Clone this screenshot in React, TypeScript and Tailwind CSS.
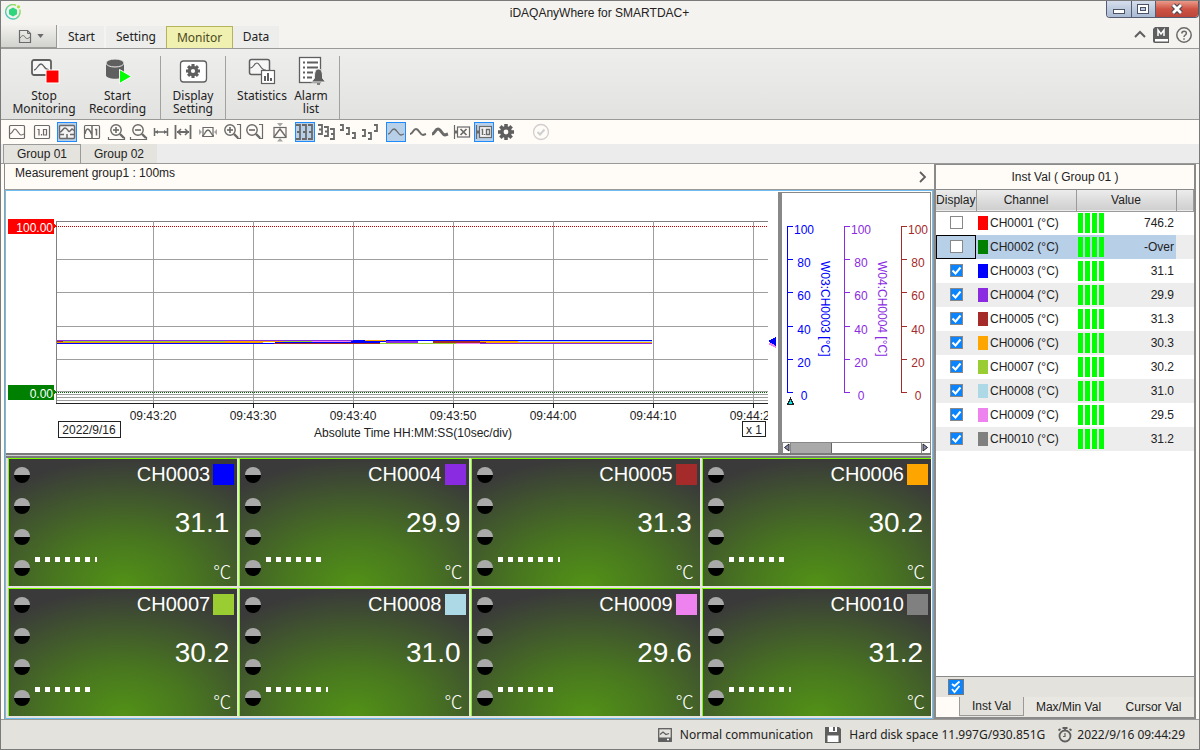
import { useState, type ReactNode } from 'react';
import clsx from 'clsx';

const channels = [
  { id: 'CH0001', color: '#ff0000', value: '746.2' },
  { id: 'CH0002', color: '#008000', value: '-Over' },
  { id: 'CH0003', color: '#0000ff', value: '31.1' },
  { id: 'CH0004', color: '#8a2be2', value: '29.9' },
  { id: 'CH0005', color: '#a52a2a', value: '31.3' },
  { id: 'CH0006', color: '#ffa500', value: '30.3' },
  { id: 'CH0007', color: '#9acd32', value: '30.2' },
  { id: 'CH0008', color: '#add8e6', value: '31.0' },
  { id: 'CH0009', color: '#ee82ee', value: '29.5' },
  { id: 'CH0010', color: '#808080', value: '31.2' },
];

const tiles = [
  { id: 'CH0003', color: '#0000ff', value: '31.1', bar: 62 },
  { id: 'CH0004', color: '#8a2be2', value: '29.9', bar: 56 },
  { id: 'CH0005', color: '#a52a2a', value: '31.3', bar: 62 },
  { id: 'CH0006', color: '#ffa500', value: '30.2', bar: 56 },
  { id: 'CH0007', color: '#9acd32', value: '30.2', bar: 56 },
  { id: 'CH0008', color: '#add8e6', value: '31.0', bar: 62 },
  { id: 'CH0009', color: '#ee82ee', value: '29.6', bar: 56 },
  { id: 'CH0010', color: '#808080', value: '31.2', bar: 62 },
];

// [y, x1, x2, color]
const traces: [number, number, number, string][] = [
  [149, 51, 347, '#8a2be2'],
  [149, 347, 359, '#0000ff'],
  [149, 359, 380, '#ffa500'],
  [149, 380, 646, '#0000ff'],
  [150, 51, 57, '#a52a2a'],
  [150, 57, 219, '#9acd32'],
  [150, 219, 277, '#ffa500'],
  [150, 277, 306, '#9acd32'],
  [150, 306, 345, '#ee82ee'],
  [150, 345, 380, '#0000ff'],
  [150, 380, 412, '#8a2be2'],
  [150, 427, 474, '#a52a2a'],
  [150, 474, 512, '#ffa500'],
  [150, 512, 646, '#add8e6'],
  [151, 51, 257, '#ee9a00'],
  [151, 269, 374, '#0000ff'],
  [151, 380, 412, '#8a2be2'],
  [151, 427, 480, '#a52a2a'],
  [151, 480, 646, '#ffa500'],
  [152, 51, 268, '#0000ff'],
  [152, 268, 374, '#a52a2a'],
  [152, 374, 450, '#9acd32'],
  [152, 450, 474, '#ee82ee'],
  [152, 474, 646, '#8a2be2'],
];

const times = ['09:43:20', '09:43:30', '09:43:40', '09:43:50', '09:44:00', '09:44:10', '09:44:20'];

const scaleTicks = [100, 80, 60, 40, 20, 0];
const scaleY = [35, 68, 101, 135, 168, 201];

const GEAR_TEETH = [0, 45, 90, 135, 180, 225, 270, 315];

function Gear({ cx, cy, r, hole }: { cx: number; cy: number; r: number; hole: string }) {
  return (
    <g fill="#5f5f5f" stroke="none">
      {GEAR_TEETH.map((a) => (
        <rect
          key={a}
          x={cx - r * 0.22}
          y={cy - r}
          width={r * 0.44}
          height={r}
          transform={`rotate(${a} ${cx} ${cy})`}
        />
      ))}
      <circle cx={cx} cy={cy} r={r * 0.74} />
      <circle cx={cx} cy={cy} r={r * 0.3} fill={hole} />
    </g>
  );
}

function ToolButton({ label, active, children }: { label: string; active?: boolean; children: ReactNode }) {
  return (
    <button
      type="button"
      aria-label={label}
      className={clsx(
        'h-5 w-5 shrink-0 text-[#6a6a6a]',
        active && 'bg-[#b8cfe8] outline -outline-offset-1 outline-[#1e8cff]'
      )}
    >
      <svg viewBox="0 0 20 20" className="h-5 w-5" fill="none" stroke="currentColor" strokeWidth="1.2">
        {children}
      </svg>
    </button>
  );
}

function Frame() {
  return <rect x="2.5" y="3.5" width="15" height="13" rx="1" />;
}

function Magnifier({ plus, bracket }: { plus?: boolean; bracket?: boolean }) {
  const cx = bracket ? 7 : 9;
  return (
    <>
      <circle cx={cx} cy="8" r="5.2" strokeWidth="1.4" />
      <path d={`M${cx + 4} 12l4 4`} strokeWidth="2.4" />
      <path d={`M${cx - 3} 8h6`} strokeWidth="1.6" />
      {plus && <path d={`M${cx} 5v6`} strokeWidth="1.6" />}
      {bracket ? <path d="M14 2.500h3.500v14H14" strokeWidth="1.200" /> : <path d="M1.500 15v2.500h16V15" />}
    </>
  );
}

// "]" shaped axis mark with a centre tick, used by the scale layout buttons
function AxisMark({ x, y, h }: { x: number; y: number; h: number }) {
  return <path d={`M${x} ${y}h4v${h}h-4M${x + 1} ${y + h / 2}h3`} strokeWidth="1.8" />;
}

function ToolBar() {
  return (
    <div className="flex h-6 items-center gap-[5px] bg-[#fffbf6] pl-[6px]">
      <ToolButton label="Trend">
        <Frame />
        <path d="M3 12c3-1 3-5 5-5s4 6 6 6 2-1 3-1" />
      </ToolButton>
      <ToolButton label="Digital">
        <Frame />
        <path d="M5.500 7.500h1.500v6M9.500 12v1.500M11.500 7.500h3v5.500h-3z" />
      </ToolButton>
      <ToolButton label="Trend and digital" active>
        <rect x="2.5" y="3.500" width="15" height="13" rx="1" fill="#f4f4f4" strokeWidth="1.400" />
        <path d="M3 10c2 0 3-4 5-4 3 0 3 5 5 3l2-2 2 1.500M3 12.500h4M13 12.500h4M10 12v5" strokeWidth="1.500" />
      </ToolButton>
      <ToolButton label="Trend with values">
        <Frame />
        <path d="M3 12c1-6 3-6 5-3l2 4M10 4v12M13 7.500h1.500v6" strokeWidth="1.500" />
      </ToolButton>
      <div className="flex gap-[2px]">
        <ToolButton label="Zoom in time">
          <Magnifier plus />
        </ToolButton>
        <ToolButton label="Zoom out time">
          <Magnifier />
        </ToolButton>
        <ToolButton label="Fit width">
          <path d="M3.500 6v8M16.500 6v8M4 10h12" strokeWidth="1.500" />
          <path d="M4 10l3-2v4zM16 10l-3-2v4z" fill="currentColor" stroke="none" />
        </ToolButton>
        <ToolButton label="Full width">
          <path d="M2.500 3v14M17.500 3v14M4 10h12" strokeWidth="1.800" />
          <path d="M8 7l-3 3 3 3M12 7l3 3-3 3" strokeWidth="1.500" />
        </ToolButton>
      </div>
      <ToolButton label="Auto range">
        <path d="M5 5.500h10v9H5z" />
        <path d="M4 14c3 0 3-6 6-6s3 6 6 6" strokeWidth="1.300" />
        <path d="M1 7l3 3-3 3zM19 7l-3 3 3 3z" fill="#a5a5a5" stroke="none" />
      </ToolButton>
      <div className="flex gap-[2px]">
        <ToolButton label="Zoom in scale">
          <Magnifier plus bracket />
        </ToolButton>
        <ToolButton label="Zoom out scale">
          <Magnifier bracket />
        </ToolButton>
      </div>
      <ToolButton label="Fit scale">
        <rect x="4" y="5.500" width="12" height="10" />
        <path d="M4 15l6-8 6 8" strokeWidth="1.400" />
        <path d="M7 1h6l-3 3.500zM7 19.500h6l-3-3.500z" fill="#a5a5a5" stroke="none" />
      </ToolButton>
      <div className="flex gap-[2px]">
        <ToolButton label="Scales aligned" active>
          <AxisMark x={1} y={3} h={14} />
          <AxisMark x={7} y={3} h={14} />
          <AxisMark x={13} y={3} h={14} />
        </ToolButton>
        <ToolButton label="Scales cascade">
          <AxisMark x={1} y={3} h={9} />
          <AxisMark x={7} y={5} h={9} />
          <AxisMark x={13} y={7} h={10} />
        </ToolButton>
        <ToolButton label="Scales stepped">
          <path d="M1 3h3v5H1M7 6h3v6H7M13 11h3v5h-3" strokeWidth="1.800" />
        </ToolButton>
        <ToolButton label="Scales stepped up">
          <path d="M1 8h3v6H1M7 11h3v6H7M13 3h3v6h-3" strokeWidth="1.800" />
        </ToolButton>
      </div>
      <div className="flex gap-[2px]">
        <ToolButton label="Thin line" active>
          <path d="M2 12c3 0 3-5 6-5s4 6 7 6l3-1" strokeWidth="1.300" />
        </ToolButton>
        <ToolButton label="Medium line">
          <path d="M2 12c3 0 3-5 6-5s4 6 7 6l3-1" strokeWidth="2" />
        </ToolButton>
        <ToolButton label="Thick line">
          <path d="M2 12c3 0 3-5 6-5s4 6 7 6l3-1" strokeWidth="3" />
        </ToolButton>
        <ToolButton label="Hide alarm">
          <path d="M2.500 3v14" />
          <rect x="5.500" y="5" width="12" height="10" />
          <path d="M2 10h3" strokeWidth="3" />
          <path d="M8.500 7l6 6M14.500 7l-6 6" strokeWidth="1.700" />
        </ToolButton>
        <ToolButton label="Show current value" active>
          <path d="M2.500 3v14" />
          <rect x="5.500" y="4.500" width="12" height="11" fill="#f4f4f4" />
          <path d="M2 10h3" strokeWidth="3" />
          <path d="M7.500 7.500h1v5.500M10.500 12v1M12.500 7.500h3v5h-3z" strokeWidth="1.400" />
        </ToolButton>
        <ToolButton label="Display options">
          <Gear cx={10} cy={10} r={8} hole="#fffbf6" />
        </ToolButton>
      </div>
      <div className="flex pl-[10px]">
        <ToolButton label="Acknowledge">
          <circle cx="10" cy="10" r="7.500" stroke="#cfcfcf" strokeWidth="1.300" />
          <path d="M6.500 10l2.500 2.500 4.500-5" stroke="#cfcfcf" strokeWidth="2" />
        </ToolButton>
      </div>
    </div>
  );
}

function AppLogo() {
  return (
    <svg width="16" height="16" viewBox="0 0 16 16" fill="none" className="shrink-0">
      <defs>
        <linearGradient id="ring" x1="0" y1="1" x2="1" y2="0">
          <stop offset="0" stopColor="#3dc2d8" />
          <stop offset="1" stopColor="#a6e244" />
        </linearGradient>
      </defs>
      <path d="M11 1.300A7.200 7.200 0 1 0 14.700 5.500" stroke="url(#ring)" strokeWidth="1.400" />
      <path d="M8 3.500l4 2.200v4.600l-4 2.200-4-2.200V5.700z" fill="#2fd67d" />
      <circle cx="13.500" cy="2.800" r="1.600" fill="#a6e244" />
    </svg>
  );
}

function TitleBar() {
  return (
    <header className="flex h-6 items-start justify-between pl-1">
      <div className="flex w-[88px] pt-[3px]">
        <AppLogo />
      </div>
      <h1 className="pt-[2px] text-[12px] leading-[20px]">iDAQAnyWhere for SMARTDAC+</h1>
      <div className="flex h-[17px] w-[93px] overflow-hidden rounded-b border border-t-0 border-[#555b70]">
        <button
          type="button"
          aria-label="Minimize"
          className="flex flex-1 items-end justify-center border-r border-[#555b70] bg-linear-to-b from-[#d5deec] to-[#a9bad2] pb-[3px]"
        >
          <span className="h-[5px] w-3 border border-[#4b5265] bg-white" />
        </button>
        <button
          type="button"
          aria-label="Maximize"
          className="flex flex-1 items-center justify-center border-r border-[#555b70] bg-linear-to-b from-[#d5deec] to-[#a9bad2]"
        >
          <span className="flex h-[10px] w-3 items-center justify-center border border-[#4b5265] bg-white">
            <span className="h-1 w-[6px] border border-[#4b5265] bg-[#b9c8dd]" />
          </span>
        </button>
        <button
          type="button"
          aria-label="Close"
          className="flex w-[42px] items-center justify-center bg-linear-to-b from-[#e99a8b] via-[#cf5344] to-[#b9473b]"
        >
          <svg width="14" height="12" viewBox="0 0 14 12">
            <path d="M3 2l8 8M11 2l-8 8" stroke="#4b4450" strokeWidth="5" />
            <path d="M3 2l8 8M11 2l-8 8" stroke="#fff" strokeWidth="2.800" />
          </svg>
        </button>
      </div>
    </header>
  );
}

function RibbonTabs() {
  const [tab, setTab] = useState('Monitor');
  return (
    <nav className="flex h-6 items-end border-b border-[#9a9a98] font-['Noto_Sans',sans-serif] text-[12px]">
      <button
        type="button"
        aria-label="File menu"
        className="mr-[2px] flex h-[23px] w-14 items-center justify-center gap-[5px] self-start border-r border-b border-[#9a9a98] bg-linear-to-b from-[#f3f2ef] to-[#d2d2cf] pl-1"
      >
        <svg width="14" height="15" viewBox="0 0 14 15" fill="none" stroke="#6a6a6a">
          <path d="M1.500 1.500h8l3 3v9h-11z" strokeWidth="1.200" />
          <path d="M9.500 1.500v3h3M2 9c2-3 4-3 5-1s3 2 5 0" />
        </svg>
        <svg width="7" height="4" viewBox="0 0 8 5">
          <path d="M0 0h8l-4 5z" fill="#6a6a6a" />
        </svg>
      </button>
      {['Start', 'Setting', 'Monitor', 'Data'].map((name) => (
        <button
          key={name}
          type="button"
          onClick={() => setTab(name)}
          className={clsx(
            'h-[22px] leading-[22px]',
            name === 'Start' && 'mr-[2px] w-[45px]',
            name === 'Setting' && 'w-[60px]',
            name === 'Monitor' && 'w-[67px]',
            name === 'Data' && 'w-[46px]',
            tab === name ? 'border border-b-0 border-[#b5b45a] bg-[#f0f0b0] text-[#4a4a20]' : 'bg-[#ededeb]'
          )}
        >
          {name}
        </button>
      ))}
      <div className="ml-auto flex items-center gap-[7px] self-start pt-[2px] pr-[7px]">
        <button type="button" aria-label="Collapse ribbon">
          <svg width="12" height="16" viewBox="0 0 12 16" fill="none" stroke="#5f5f5f" strokeWidth="2">
            <path d="M1 10l5-5 5 5" />
          </svg>
        </button>
        <button type="button" aria-label="Manual">
          <svg width="16" height="16" viewBox="0 0 16 16">
            <path d="M2 0h14v16H2a2 2 0 0 1-2-2V2z" fill="#5f5f5f" />
            <path d="M2 12h13v2.500H2z" fill="#fff" />
            <path d="M5 9V3l3 4 3-4v6" fill="none" stroke="#fff" strokeWidth="1.500" />
          </svg>
        </button>
        <button type="button" aria-label="Help">
          <svg width="16" height="16" viewBox="0 0 16 16" fill="none" stroke="#6a6a6a" strokeWidth="1.500">
            <circle cx="8" cy="8" r="7.200" />
            <path d="M5.800 6.500c0-3 4.600-3 4.600-.3C10.400 8 8 8 8 10M8 11.200v1.600" />
          </svg>
        </button>
      </div>
    </nav>
  );
}

function RibbonButton({ lines, width, children }: { lines: string[]; width: string; children: ReactNode }) {
  return (
    <button type="button" className={clsx('flex flex-col items-center', width)}>
      <svg width="32" height="32" viewBox="0 0 32 32" fill="none" stroke="#5f5f5f" className="shrink-0">
        {children}
      </svg>
      <span className="pt-px text-[12px] leading-[13px]">
        {lines.map((line) => (
          <span key={line} className="block">
            {line}
          </span>
        ))}
      </span>
    </button>
  );
}

function Ribbon() {
  return (
    <section className="flex h-[71px] items-stretch border-b border-[#9a9a98] bg-linear-to-b from-[#eeeeec] to-[#e2e2e0] pt-[7px] font-['Noto_Sans',sans-serif]">
      <div className="flex gap-2 border-r border-[#a2a2a2] pr-3 pl-2">
        <RibbonButton lines={['Stop', 'Monitoring']} width="w-[70px]">
          <rect x="4" y="4" width="19" height="15" rx="2" fill="#f6f6f6" strokeWidth="1.800" />
          <path d="M6 14c3 0 4-6 7-6s3 6 8 6" strokeWidth="1.300" />
          <rect x="18" y="14" width="13" height="13" fill="#ff0000" stroke="#fff" />
        </RibbonButton>
        <RibbonButton lines={['Start', 'Recording']} width="w-[61px]">
          <path d="M4 7v12c0 5 18 5 18 0V7z" fill="#5f5f5f" stroke="none" />
          <ellipse cx="13" cy="7" rx="9" ry="4" fill="#5f5f5f" stroke="#ececea" />
          <path d="M17.500 13.500v14l12-7z" fill="#00ff00" stroke="#fff" />
        </RibbonButton>
      </div>
      <div className="flex w-[65px] justify-center border-r border-[#a2a2a2]">
        <RibbonButton lines={['Display', 'Setting']} width="w-14">
          <rect x="3.500" y="5" width="26" height="21" rx="3" fill="#fff" strokeWidth="1.300" />
          <Gear cx={16} cy={15} r={7} hole="#fff" />
        </RibbonButton>
      </div>
      <div className="flex gap-px border-r border-[#a2a2a2] pr-2 pl-2">
        <RibbonButton lines={['Statistics']} width="w-14">
          <rect x="3.500" y="3.500" width="20" height="15" rx="2" fill="#f6f6f6" strokeWidth="1.500" />
          <path d="M4 12c4 0 4-5 7-5s4 8 9 7" strokeWidth="1.200" />
          <rect x="15.500" y="14.500" width="13" height="13" fill="#fff" strokeWidth="1.200" />
          <path d="M19 25v-5M22 25v-8M25 25v-3" strokeWidth="2" />
        </RibbonButton>
        <RibbonButton lines={['Alarm', 'list']} width="w-10">
          <rect x="4.500" y="1.500" width="21" height="25" fill="#fff" strokeWidth="1.300" />
          <path d="M8 6.500h2M8 11.500h2M8 16.500h2M8 21.500h2M12 6.500h11M12 11.500h11M12 16.500h6M12 21.500h5" strokeWidth="2" />
          <path d="M23.500 13c4 0 4 5 4 9l3 4h-14l3-4c0-4 0-9 4-9z" fill="#5f5f5f" stroke="#f2f2f0" />
          <path d="M22 28h3" strokeWidth="1.500" />
        </RibbonButton>
      </div>
    </section>
  );
}

function TrendPlot() {
  return (
    <div className="flex min-w-0 flex-1">
      <svg className="h-full min-w-0 flex-1" fontSize="12" fill="#222" shapeRendering="crispEdges">
        {[68, 101, 135, 168, 200, 203, 206, 209].map((y) => (
          <path key={y} d={`M50 ${y}.5h2000`} stroke="#9e9e9e" />
        ))}
        <path d="M50 30.5h2000M50.500 30v182" stroke="#808080" fill="none" />
        {times.map((t, i) => (
          <g key={t}>
            <path d={`M${147 + i * 100}.5 30v182`} stroke="#9e9e9e" />
            <path d={`M${147 + i * 100}.5 212v5`} stroke="#222" />
            <text x={147 + i * 100} y="229" textAnchor="middle">
              {t}
            </text>
          </g>
        ))}
        <path d="M50 212.500h2000" stroke="#222" />
        <path d="M50 35.500h2000" stroke="#c00000" strokeDasharray="1 1" />
        <path d="M50 201.500h2000" stroke="#006000" strokeDasharray="1 1" />
        {traces.map(([y, x1, x2, color]) => (
          <rect key={`${y}-${x1}`} x={x1} y={y} width={x2 - x1} height="1" fill={color} />
        ))}
        <path d="M2 28h46v5l2 2-2 2v6H2z" fill="#ff0000" />
        <path d="M2 194h46v5l2 2-2 2v6H2z" fill="#008000" />
        <text x="47" y="41" fill="#fff" textAnchor="end">
          100.00
        </text>
        <text x="47" y="207" fill="#fff" textAnchor="end">
          0.00
        </text>
        <rect x="52.500" y="230.500" width="62" height="16" fill="#fff" stroke="#222" />
        <text x="83" y="243" textAnchor="middle">
          2022/9/16
        </text>
        <text x="407" y="246" textAnchor="middle">
          Absolute Time HH:MM:SS(10sec/div)
        </text>
        <rect x="736.500" y="230.500" width="23" height="15" fill="#fff" stroke="#222" />
        <text x="748" y="243" textAnchor="middle">
          x 1
        </text>
      </svg>
      <svg className="h-full w-[10px] shrink-0" shapeRendering="crispEdges">
        <path d="M0 152l8-4v8z" fill="#ee82ee" transform="translate(0 1)" />
        <path d="M0 150l8-4v9z" fill="#0000ff" />
      </svg>
    </div>
  );
}

function ScalePane() {
  const scales = [
    { x: 5, color: '#0000ff', name: 'W03:CH0003 [°C]' },
    { x: 62, color: '#8a2be2', name: 'W04:CH0004 [°C]' },
    { x: 119, color: '#a52a2a', name: '' },
  ];
  return (
    <div className="mt-px flex w-[153px] shrink-0 flex-col border-t border-r border-l-4 border-[#888]">
      <svg className="min-h-0 w-full flex-1" fontSize="12" shapeRendering="crispEdges">
        {scales.map((s) => (
          <g key={s.x} fill={s.color}>
            <path d={`M${s.x}.5 33v167`} stroke={s.color} />
            {scaleTicks.map((v, i) => (
              <g key={v}>
                <path d={`M${s.x} ${scaleY[i] - 2}.5h6`} stroke={s.color} />
                <text x={s.x + 17} y={scaleY[i] + 6} textAnchor="middle">
                  {v}
                </text>
              </g>
            ))}
            {s.name && <text transform={`translate(${s.x + 34} 68) rotate(90)`}>{s.name}</text>}
          </g>
        ))}
        <path d="M5.500 211.500h6l-3-6z" fill="#00e5e5" stroke="#222" />
      </svg>
      <div className="flex h-[11px] border-t border-l border-[#888] bg-white">
        <button type="button" aria-label="Scroll left" className="w-2 border-r border-[#888]">
          <svg width="7" height="10" viewBox="0 0 7 10">
            <path d="M6 1v7L1.500 4.500z" fill="#8a8ab8" stroke="#222" />
          </svg>
        </button>
        <div className="h-full w-[41px] border-r border-[#666] bg-[#a9a9a9]" />
        <button type="button" aria-label="Scroll right" className="ml-auto w-[9px] border-l border-[#888]">
          <svg width="7" height="10" viewBox="0 0 7 10">
            <path d="M1 1v7l4.500-3.500z" fill="#8a8ab8" stroke="#222" />
          </svg>
        </button>
      </div>
    </div>
  );
}

function DigitalTile({ id, color, value, bar }: (typeof tiles)[number]) {
  return (
    <article className="flex h-32 border-t border-l border-[#7cfc00] bg-[radial-gradient(ellipse_80%_100%_at_50%_100%,#529216_0%,#487520_40%,#3a3a3a_100%)] pr-[3px] text-white">
      <ul className="flex w-[26px] flex-col gap-[15px] pt-2 pl-[5px]">
        {[1, 2, 3, 4].map((n) => (
          <li key={n} className="h-4 w-4 rounded-full bg-linear-to-b from-[#a9a9a9] from-50% to-black to-50%" />
        ))}
      </ul>
      <div className="flex flex-1 flex-col">
        <div className="flex items-center justify-end gap-[3px] pt-1">
          <span className="text-[20px] leading-[22px]">{id}</span>
          <span className="h-[21px] w-[21px]" style={{ backgroundColor: color }} />
        </div>
        <div className="pt-[22px] pr-[5px] text-right text-[28px] leading-[32px]">{value}</div>
        <div
          className="mt-[18px] h-[5px] bg-[repeating-linear-gradient(90deg,#fff_0_5px,transparent_5px_10px)]"
          style={{ width: bar }}
        />
        <div className="pr-[3px] text-right font-['Noto_Sans_CJK_JP',sans-serif] text-[18px] leading-[18px] font-light">
          ℃
        </div>
      </div>
    </article>
  );
}

function GroupTabs() {
  const [group, setGroup] = useState('Group 01');
  return (
    <div className="flex h-5 border-b border-[#9a9a98] bg-[#ececec] pl-[2px] text-[12px]">
      {['Group 01', 'Group 02'].map((g) => (
        <button
          key={g}
          type="button"
          onClick={() => setGroup(g)}
          className={clsx('bg-[#e5e3de]', group === g ? 'w-[78px] border border-b-0 border-[#9a9a98]' : 'w-[76px]')}
        >
          {g}
        </button>
      ))}
    </div>
  );
}

function InstValPanel() {
  const [shown, setShown] = useState<Record<string, boolean>>(
    Object.fromEntries(channels.map((c, i) => [c.id, i > 1]))
  );

  return (
    <aside className="flex w-[262px] shrink-0 flex-col border-2 border-t border-[#8a8a8a] bg-[#e4e2dc] text-[12px]">
      <h2 className="h-[25px] border-b border-[#8a8a8a] bg-[#fffbf6] text-center leading-[24px]">
        Inst Val ( Group 01 )
      </h2>
      <div className="flex-1 border-b border-[#8a8a8a] bg-white">
        <table className="w-full table-fixed border-collapse">
          <thead>
            <tr className="h-[21px] border-b border-[#9a9a98] bg-linear-to-b from-[#ececec] to-[#cfcfcf]">
              <th className="w-10 border-r border-[#9a9a98] font-normal">Display</th>
              <th className="w-[100px] border-r border-[#9a9a98] font-normal">Channel</th>
              <th className="w-[100px] border-r border-[#9a9a98] font-normal">Value</th>
              <th className="border-r border-[#9a9a98]" />
            </tr>
          </thead>
          <tbody>
            {channels.map((c, i) => (
              <tr key={c.id} className={clsx('h-6', i % 2 === 1 && 'bg-[#ededed]')}>
                <td
                  className={clsx(
                    'p-0 pb-px',
                    c.id === 'CH0002' && 'bg-[#b8cfe8] outline -outline-offset-1 outline-black'
                  )}
                >
                  <label className="relative mx-auto block h-[13px] w-[13px]">
                    <input
                      type="checkbox"
                      aria-label={`Display ${c.id}`}
                      checked={shown[c.id]}
                      onChange={(e) => setShown({ ...shown, [c.id]: e.target.checked })}
                      className="peer block h-[13px] w-[13px] appearance-none border border-[#888] bg-white checked:bg-[#0a84ff]"
                    />
                    <svg
                      viewBox="0 0 13 13"
                      className="pointer-events-none absolute inset-0 hidden peer-checked:block"
                      fill="none"
                      stroke="#fff"
                      strokeWidth="2"
                    >
                      <path d="M2.500 6.500l3 3 5-6" />
                    </svg>
                  </label>
                </td>
                <td className={clsx('p-0', c.id === 'CH0002' && 'bg-[#b8cfe8]')}>
                  <div className="flex items-center gap-[2px] pl-[2px]">
                    <span className="h-[14px] w-[10px]" style={{ backgroundColor: c.color }} />
                    {c.id} (°C)
                  </div>
                </td>
                <td className={clsx('p-0', c.id === 'CH0002' && 'bg-[#b8cfe8]')}>
                  <div className="flex items-center justify-between pr-[2px] pl-[2px]">
                    <span className="h-5 w-[26px] bg-[repeating-linear-gradient(90deg,#00ff00_0_5px,transparent_5px_7px)]" />
                    {c.value}
                  </div>
                </td>
                <td />
              </tr>
            ))}
          </tbody>
        </table>
      </div>
      <div className="flex h-5 items-center pl-3">
        <button type="button" aria-label="Toggle all channels" className="h-4 w-4 border border-[#777] bg-[#0a84ff]">
          <svg viewBox="0 0 14 14" className="h-[14px] w-[14px]" fill="none" stroke="#fff" strokeWidth="1.800">
            <path d="M3 4l2.500 2 5-4.500M3 9l2.500 3 5-6" />
          </svg>
        </button>
      </div>
      <div className="flex h-5 bg-[#e9e7e1]">
        <div className="w-[23px] bg-[#fffbf6]" />
        <button type="button" className="mb-px w-[65px] border border-t-0 border-[#9a9a98] bg-[#e4e2dc]">
          Inst Val
        </button>
        <button type="button" className="w-[89px]">
          Max/Min Val
        </button>
        <button type="button" className="flex-1 whitespace-nowrap">
          Cursor Val
        </button>
      </div>
    </aside>
  );
}

function StatusBar() {
  return (
    <footer className="flex h-[29px] items-center justify-end gap-3 bg-[#e4e2dc] pr-[14px] font-['Noto_Sans',sans-serif] text-[12px]">
      <span className="flex items-center gap-2">
        <svg width="14" height="14" viewBox="0 0 14 14" fill="none" stroke="#5f5f5f" strokeWidth="1.300">
          <rect x=".7" y=".7" width="12.600" height="12.600" />
          <path d="M2 6.500l3-2.500 3 2.500 3-1" />
          <path d="M1 9.500h12v4H1z" fill="#5f5f5f" stroke="none" />
          <path d="M9 11.500h2" stroke="#fff" />
        </svg>
        Normal communication
      </span>
      <span className="flex items-center gap-2">
        <svg width="16" height="16" viewBox="0 0 16 16">
          <path d="M0 0h14l2 2v14H0z" fill="#5f5f5f" />
          <path d="M4 0h8v5H4zM2.500 8.500h11V15h-11z" fill="#fff" />
          <path d="M8 0h2v4H8z" fill="#5f5f5f" />
        </svg>
        Hard disk space 11.997G/930.851G
      </span>
      <span className="flex items-center gap-1">
        <svg width="16" height="16" viewBox="0 0 16 16" fill="none" stroke="#5f5f5f" strokeWidth="1.800">
          <circle cx="8" cy="9" r="5.500" />
          <path d="M5.500 1h5M8 1v2.500M1.500 3.500l2-1.500M14.500 3.500l-2-1.500" />
          <path d="M8 6v3.500H6" strokeWidth="1.200" />
        </svg>
        2022/9/16 09:44:29
      </span>
    </footer>
  );
}

export default function App() {
  return (
    <div className="flex min-h-screen flex-col border border-[#7a7a7a] bg-[#f5f3ef] font-['Liberation_Sans',Arial,sans-serif] text-[#222]">
      <TitleBar />
      <RibbonTabs />
      <Ribbon />
      <ToolBar />
      <GroupTabs />
      <div className="flex flex-1 border-b border-[#9a9a98] bg-[#fffbf6] pr-[3px] pl-[3px]">
        <main className="flex min-w-0 flex-1 flex-col border-l border-[#8a8a8a]">
          <div className="flex h-[25px] items-center justify-between bg-[#fffbf6] pr-[6px] pl-[10px] text-[12px]">
            <span className="pb-2">Measurement group1 : 100ms</span>
            <button type="button" aria-label="Next">
              <svg width="10" height="12" viewBox="0 0 10 12" fill="none" stroke="#5f5f5f" strokeWidth="1.800">
                <path d="M2 1l5 5-5 5" />
              </svg>
            </button>
          </div>
          <div className="mt-px mr-px flex flex-1 flex-col border border-[#6fbdf0] bg-white pr-px outline outline-[#9a9a98]">
            <div className="flex h-[262px]">
              <TrendPlot />
              <ScalePane />
            </div>
            <div className="h-[5px] border-y-2 border-[#7a7a7a] bg-[#cfcfcf]" />
            <div className="grid flex-1 grid-cols-4 content-start gap-[2px] bg-[#e6e4df] pl-[2px]">
              {tiles.map((t) => (
                <DigitalTile key={t.id} {...t} />
              ))}
            </div>
          </div>
        </main>
        <InstValPanel />
      </div>
      <StatusBar />
    </div>
  );
}
